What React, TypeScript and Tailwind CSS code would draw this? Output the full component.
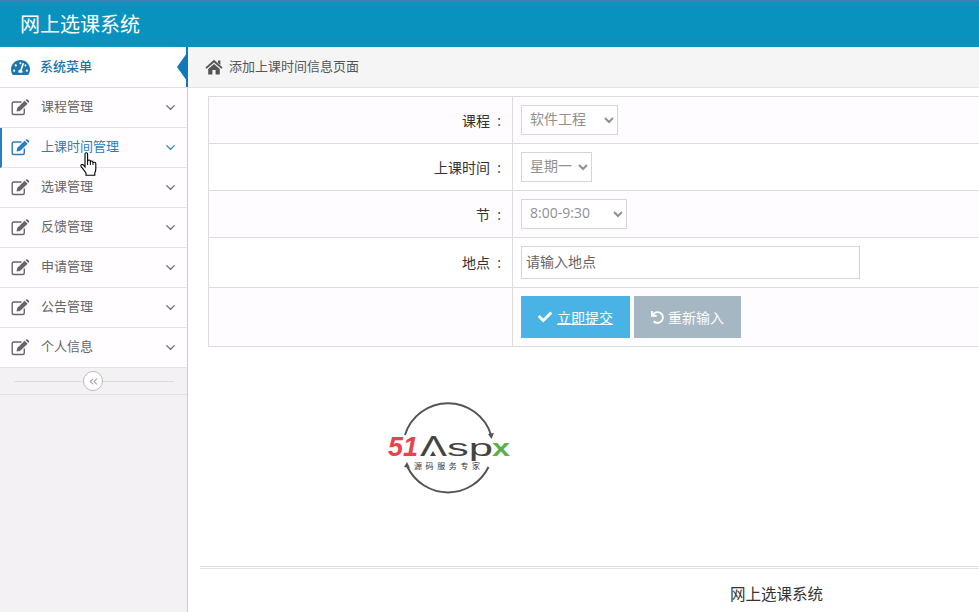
import { FaCheck, FaTachometerAlt, FaUndo } from "react-icons/fa";
import { FiChevronDown, FiChevronsLeft } from "react-icons/fi";

const MENU = ["课程管理", "上课时间管理", "选课管理", "反馈管理", "申请管理", "公告管理", "个人信息"];

function EditIcon() {
    return (
        <svg width="19" height="17" viewBox="0 0 19 17" className="shrink-0" fill="currentColor">
            <path d="M10.5 3 H3 Q1.2 3 1.2 4.8 V13.7 Q1.2 15.5 3 15.5 H11.5 Q13.3 15.5 13.3 13.7 V9.5" fill="none" stroke="currentColor" strokeWidth="1.4" />
            <path d="M5.5 12.5 L6.2 9 L13.6 1.8 L16.6 4.8 L9 12 Z" />
            <path d="M14.5 1 L15.4 .3 Q16 0 16.6 .4 L18 1.8 Q18.4 2.4 18 3 L17.4 3.9 Z" />
        </svg>
    );
}

function HomeIcon() {
    return (
        <svg width="18" height="16" viewBox="0 0 18 16" fill="#555">
            <path d="M9 .8 L17.6 8.4 L16.4 9.8 L9 3.4 L1.6 9.8 L.4 8.4 Z" />
            <path d="M13 1.4 H15.4 V6 L13 3.9 Z" />
            <path d="M3.2 10 L9 5 L14.8 10 V15.6 H10.6 V11 H7.4 V15.6 H3.2 Z" />
        </svg>
    );
}

function HandCursor() {
    return (
        <svg width="18" height="24" viewBox="0 0 18 24" className="absolute left-[80px] top-[152px]">
            <path
                d="M5 2 Q5 .7 6.3 .7 Q7.6 .7 7.6 2 V9 Q8 8 9.2 8 Q10.4 8 10.4 9.4 Q10.8 9 11.8 9 Q13 9 13 10.4 Q13.4 10.2 14.4 10.2 Q15.8 10.2 15.8 11.6 V17 Q15.8 19 14.8 21 V23.2 H6 V21 L1.2 14.6 Q.4 13.4 1.4 12.6 Q2.4 12 3.4 13 L5 15 Z"
                fill="#fff"
                stroke="#000"
                strokeWidth="1.1"
            />
            <path d="M7.6 9 V13 M10.4 9.4 V13 M13 10.4 V13" stroke="#000" strokeWidth="1" fill="none" />
        </svg>
    );
}

function Logo() {
    return (
        <svg width="128" height="94" viewBox="0 0 128 94" className="block">
            {/* ring, broken where the wordmark crosses it */}
            <path d="M20 34 A45 45 0 0 1 106 34" fill="none" stroke="#555" strokeWidth="2" />
            <path d="M22.5 66 A45 45 0 0 0 103.5 66" fill="none" stroke="#555" strokeWidth="2" />
            <path d="M103 33 L109 32 L106.5 38 Z" fill="#555" />
            <path d="M19 66 L25 67 L22 61 Z" fill="#555" />
            <text x="3" y="55" fontFamily="Liberation Sans" fontSize="28" fontWeight="700" fontStyle="italic" fill="#e8434b" textLength="30" lengthAdjust="spacingAndGlyphs">51</text>
            <text x="35" y="55" fontFamily="Liberation Sans" fontSize="30" fill="#444" textLength="27" lengthAdjust="spacingAndGlyphs">Λ</text>
            <path d="M48 50 L51 55 H45 Z" fill="#444" />
            <text x="62" y="55" fontFamily="Liberation Sans" fontSize="24" fill="#444" textLength="46" lengthAdjust="spacingAndGlyphs">sp</text>
            <text x="107" y="55" fontFamily="Liberation Sans" fontSize="24" fontWeight="700" fill="#5bb04a" textLength="18" lengthAdjust="spacingAndGlyphs">x</text>
            <text x="29" y="68" fontFamily="Noto Sans CJK SC" fontSize="8" fill="#333" textLength="66">源码服务专家</text>
        </svg>
    );
}

function FormRow({ label, className, children }: { label: string; className: string; children: React.ReactNode }) {
    return (
        <div className={`flex border-b border-[#dcdcdc] ${className}`}>
            <div className="w-[304px] shrink-0 flex items-center justify-end pr-[11px] text-[14px] text-[#333] border-r border-[#dcdcdc]">
                {label && <span>{label}&nbsp;&nbsp;:</span>}
            </div>
            <div className="flex-1 flex items-center pl-2">{children}</div>
        </div>
    );
}

const selectCls = "h-[30px] border border-[#d5d5d5] bg-white pl-1 pb-1 text-[14px] text-[#909090]";

export default function App() {
    return (
        <div className="relative w-[979px] h-[612px] overflow-hidden bg-white" style={{ fontFamily: '"Open Sans", "Noto Sans CJK SC", sans-serif' }}>
            <header className="h-[47px] bg-[#0a92bf] border-t-2 border-[#3f7fb6] flex items-center pl-5 text-[20px] text-white">
                网上选课系统
            </header>
            <div className="flex h-[565px]">
                <aside className="relative w-[188px] shrink-0 bg-[#f3f1f3] border-r border-[#cccccc]">
                    <div className="h-[41px] bg-white border-b border-[#e0e0e0] flex items-center pl-[11px] text-[13px] font-medium text-[#1a77ad]">
                        <FaTachometerAlt className="w-[19px] h-[19px] text-[#1e76ac]" />
                        <span className="ml-[10px] pb-[1px]">系统菜单</span>
                    </div>
                    {MENU.map((m, i) => (
                        <div
                            key={m}
                            className={`h-[40px] bg-[#fffdff] border-b border-[#e4e4e4] flex items-center pr-[9px] text-[13px] ${i === 1 ? "border-l-2 border-l-[#2b7dbc] pl-[9px] text-[#2b7dbc]" : "pl-[11px] text-[#666]"}`}
                        >
                            <EditIcon />
                            <span className="ml-[11px] flex-1 pb-[2px]">{m}</span>
                            <FiChevronDown className="w-[15px] h-[15px]" />
                        </div>
                    ))}
                    <div className="relative h-[27px] border-b border-[#e0e0e0] flex items-center justify-center">
                        <div className="w-[160px] h-px bg-[#dedede]" />
                        <span className="absolute left-[83px] top-[3px] w-5 h-5 rounded-full bg-white border border-[#bbbbbb] flex items-center justify-center text-[#aaaaaa]">
                            <FiChevronsLeft className="w-[13px] h-[13px]" />
                        </span>
                    </div>
                    {/* active-item notch */}
                    <div className="absolute right-[-1px] top-0 h-[40px] w-[2px] bg-[#0f7ab5]" />
                    <div className="absolute right-0 top-[6px] w-0 h-0 border-y-[14px] border-y-transparent border-r-[10px] border-r-[#0f7ab5]" />
                </aside>
                <main className="flex-1 min-w-0">
                    <div className="h-[41px] bg-[#f5f5f5] border-b border-[#e5e5e5] flex items-center pl-[17px] text-[13px] text-[#555]">
                        <HomeIcon />
                        <span className="ml-[6px]">添加上课时间信息页面</span>
                    </div>
                    <div className="ml-5 mt-2 w-[900px] border-t border-l border-[#dcdcdc]">
                        <FormRow label="课程" className="h-[47px] bg-[#fffcff]">
                            <select className={`${selectCls} w-[97px]`} defaultValue="软件工程">
                                <option>软件工程</option>
                            </select>
                        </FormRow>
                        <FormRow label="上课时间" className="h-[47px] bg-white">
                            <select className={`${selectCls} w-[71px]`} defaultValue="星期一">
                                <option>星期一</option>
                            </select>
                        </FormRow>
                        <FormRow label="节" className="h-[47px] bg-[#fffcff]">
                            <select className={`${selectCls} w-[106px]`} defaultValue="8:00-9:30">
                                <option>8:00-9:30</option>
                            </select>
                        </FormRow>
                        <FormRow label="地点" className="h-[50px] bg-white">
                            <input
                                className="w-[339px] h-[33px] border border-[#d5d5d5] pl-1 pr-1 pb-[2px] text-[14px] text-[#555] placeholder:text-[#666]"
                                placeholder="请输入地点"
                            />
                        </FormRow>
                        <FormRow label="" className="h-[59px] bg-[#fffcff]">
                            <div className="flex gap-1">
                                <button className="w-[109px] h-[42px] bg-[#4ab3e6] text-white text-[14px] flex items-center justify-center gap-[5px]">
                                    <FaCheck className="w-[14px] h-[14px]" />
                                    <span className="underline">立即提交</span>
                                </button>
                                <button className="w-[107px] h-[42px] bg-[#a5b7c3] text-white text-[14px] flex items-center justify-center gap-[4px]">
                                    <FaUndo className="w-[13px] h-[13px]" />
                                    <span>重新输入</span>
                                </button>
                            </div>
                        </FormRow>
                    </div>
                    <div className="ml-[197px] mt-[54px]">
                        <Logo />
                    </div>
                    <div className="ml-3 mt-[71px] h-[3px] border-y border-[#e2e2e2]" />
                    <div className="mt-[14px] pl-[542px] text-[15.5px] text-[#333]">网上选课系统</div>
                </main>
            </div>
            <HandCursor />
        </div>
    );
}
